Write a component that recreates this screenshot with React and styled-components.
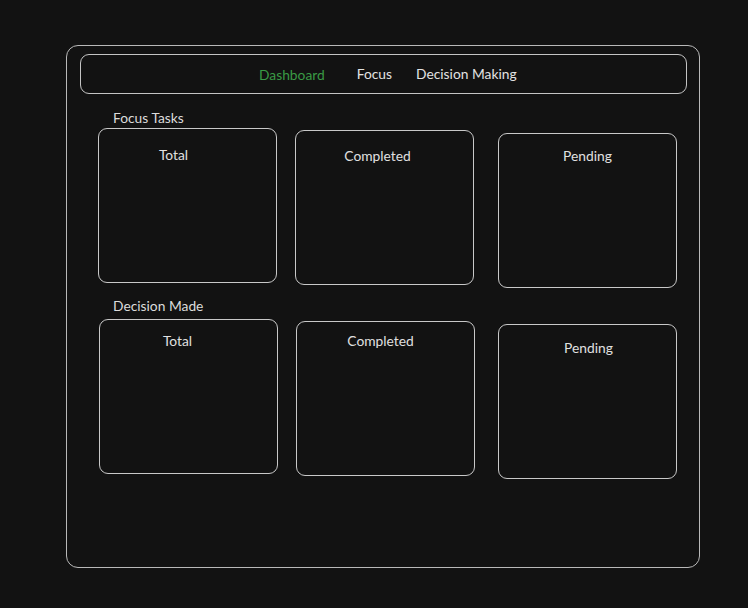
import React from "react";
import styled, { createGlobalStyle } from "styled-components";

const Global = createGlobalStyle`
  html, body { margin: 0; padding: 0; background: #121212; }
  body { font-family: Lato, "Noto Sans", sans-serif; color: #dedede; }
  #root { width: 748px; height: 608px; }
`;

const Page = styled.div`
  width: 748px;
  height: 608px;
  box-sizing: border-box;
  padding: 45px 0 0 66px;
`;

const Frame = styled.div`
  width: 634px;
  height: 523px;
  box-sizing: border-box;
  border: 1px solid #b9b9b9;
  border-radius: 12px;
  padding: 8px 12px 0 13px;
`;

const Nav = styled.nav`
  height: 40px;
  box-sizing: border-box;
  border: 1px solid #c4c4c4;
  border-radius: 9px;
  display: flex;
  align-items: center;
  padding-left: 178px;
`;

const NavItem = styled.span`
  font-size: 13.8px;
  color: ${(p) => (p.$active ? "#3a9a45" : "#e2e2e2")};
  margin-right: ${(p) => p.$gap}px;
  margin-top: ${(p) => (p.$active ? 1 : -1)}px;
`;

const SectionLabel = styled.div`
  font-size: 13.8px;
  color: #dcdcdc;
  margin: ${(p) => p.$top}px 0 0 33px;
  height: 17px;
  line-height: 17px;
`;

const Row = styled.div`
  display: flex;
  align-items: flex-start;
  margin-left: ${(p) => p.$left}px;
  margin-top: ${(p) => p.$top}px;
`;

const Card = styled.div`
  width: 179px;
  height: 155px;
  box-sizing: border-box;
  border: 1px solid #c8c8c8;
  border-radius: 9px;
  margin-top: ${(p) => p.$dy}px;
  margin-right: ${(p) => p.$gap}px;
  display: flex;
  justify-content: center;
  padding-top: ${(p) => p.$pt}px;
`;

const CardTitle = styled.span`
  font-size: 13.8px;
  color: #e0e0e0;
  margin-left: ${(p) => p.$shift}px;
  height: 17px;
  line-height: 17px;
`;

export default function App() {
  return (
    <>
      <Global />
      <Page>
        <Frame>
          <Nav>
            <NavItem $active $gap={32}>Dashboard</NavItem>
            <NavItem $gap={24}>Focus</NavItem>
            <NavItem $gap={0}>Decision Making</NavItem>
          </Nav>
          <SectionLabel $top={15}>Focus Tasks</SectionLabel>
          <Row $left={18} $top={2}>
            <Card $dy={0} $gap={18} $pt={17}><CardTitle $shift={-28}>Total</CardTitle></Card>
            <Card $dy={2} $gap={24} $pt={16}><CardTitle $shift={-14}>Completed</CardTitle></Card>
            <Card $dy={5} $gap={0} $pt={13}><CardTitle $shift={0}>Pending</CardTitle></Card>
          </Row>
          <SectionLabel $top={9}>Decision Made</SectionLabel>
          <Row $left={19} $top={5}>
            <Card $dy={0} $gap={18} $pt={12}><CardTitle $shift={-22}>Total</CardTitle></Card>
            <Card $dy={2} $gap={23} $pt={10}><CardTitle $shift={-10}>Completed</CardTitle></Card>
            <Card $dy={5} $gap={0} $pt={14}><CardTitle $shift={2}>Pending</CardTitle></Card>
          </Row>
        </Frame>
      </Page>
    </>
  );
}
